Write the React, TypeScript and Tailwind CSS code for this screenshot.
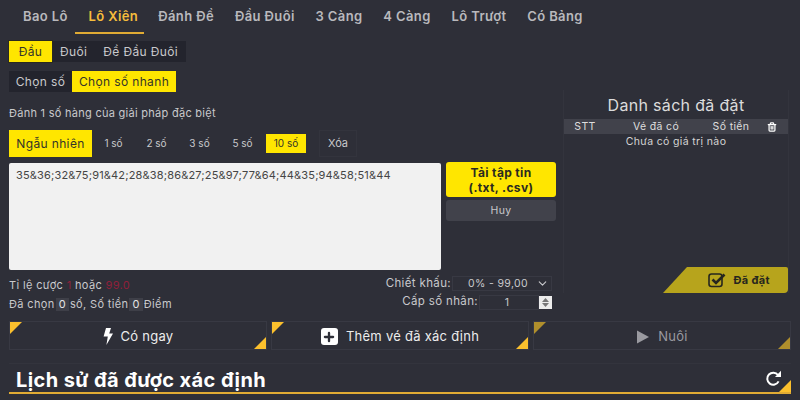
import React from "react";
import { ChevronDown, Trash2, Plus } from "lucide-react";

const F = { fontFamily: '"Inter","Noto Sans",sans-serif' };

function Corner({ dim }: { dim?: boolean }) {
  const c = dim ? "#b08f2c" : "#fbc02d";
  return (
    <>
      <svg className="absolute left-0 top-0" width="12" height="12"><polygon points="0,0 12,0 0,12" fill={c} /></svg>
      <svg className="absolute right-0 bottom-0" width="12" height="12"><polygon points="12,0 12,12 0,12" fill={c} /></svg>
    </>
  );
}

function Action({ children, dim }: { children: React.ReactNode; dim?: boolean }) {
  return (
    <div className={`relative flex-1 h-[29px] pt-[2px] border border-[#383943] flex items-center justify-center gap-2 text-[13px] tracking-[0.02em] ${dim ? "text-[#9a9aa0]" : "text-[#ececec]"}`}>
      <Corner dim={dim} />
      {children}
    </div>
  );
}

const tabs = ["Bao Lô", "Lô Xiên", "Đánh Đề", "Đầu Đuôi", "3 Càng", "4 Càng", "Lô Trượt", "Có Bảng"];

export default function App() {
  return (
    <div style={F} className="w-[800px] h-[400px] overflow-hidden bg-[#2e2f38] text-[#c9c9cc] text-[12px] tracking-[0.03em] flex flex-col">
      <div className="flex h-[34px] pl-[11px] pt-[1px] text-[13px] font-semibold text-[#b9b9bd] tracking-[0.03em]">
        {tabs.map((t) =>
          t === "Lô Xiên" ? (
            <div key={t} className="w-[69px] -ml-[3px] mr-[4px] pl-[8px] flex items-center justify-center whitespace-nowrap border-b-2 text-[#f5bd3c] border-[#e0ab34]">{t}</div>
          ) : (
            <div key={t} className="px-[10.4px] first:pl-[12px] first:pr-[10px] flex items-center whitespace-nowrap border-b-2 border-transparent">{t}</div>
          )
        )}
      </div>

      <div className="flex px-[9px] gap-[7px] h-[287px]">
        <div className="w-[547px] flex flex-col">
          <div className="flex mt-[7px] h-[21px] w-fit bg-[#23242d]">
            <div className="bg-[#ffe600] text-[#34342a] w-[43px] justify-center flex items-center shadow-[0_0_0_1px_#2a2a20]">Đầu</div>
            <div className="px-[8px] flex items-center">Đuôi</div>
            <div className="px-[8px] flex items-center">Đề Đầu Đuôi</div>
          </div>
          <div className="flex mt-[9px] h-[21px] w-fit bg-[#23242d]">
            <div className="w-[63px] justify-center flex items-center">Chọn số</div>
            <div className="bg-[#ffe600] text-[#34342a] w-[104px] justify-center flex items-center">Chọn số nhanh</div>
          </div>
          <div className="mt-[14px] h-[14px] leading-[14px] text-[11px] tracking-[0.025em]">Đánh 1 số hàng của giải pháp đặc biệt</div>
          <div className="flex items-center mt-[10px] h-[27px] text-[10px] tracking-normal">
            <div className="bg-[#ffe600] text-[#34342a] w-[83px] h-[27px] flex items-center justify-center text-[12px] tracking-[0.03em]">Ngẫu nhiên</div>
            <div className="w-[43px] text-center">1 số</div>
            <div className="w-[43px] text-center">2 số</div>
            <div className="w-[43px] text-center">3 số</div>
            <div className="w-[43px] text-center">5 số</div>
            <div className="ml-[2px] w-[40px] h-[19px] bg-[#ffe600] text-[#34342a] flex items-center justify-center">10 số</div>
            <div className="ml-[13px] w-[38px] h-[27px] flex items-center justify-center border border-[#33343d] text-[11px]">Xóa</div>
          </div>
          <div className="flex mt-[6px] gap-[5px]">
            <div className="w-[432px] h-[107px] bg-[#f1f1f1] rounded-[2px] text-[#454545] text-[11px] tracking-[0.015em] px-[7px] py-[4px]">35&amp;36;32&amp;75;91&amp;42;28&amp;38;86&amp;27;25&amp;97;77&amp;64;44&amp;35;94&amp;58;51&amp;44</div>
            <div className="w-[110px] flex flex-col gap-[3px] -mt-[1px]">
              <div className="h-[35px] bg-[#ffe600] rounded-[3px] text-[#2a2a20] font-bold text-[12px] leading-[15px] flex flex-col items-center justify-center"><span>Tải tập tin</span><span>(.txt, .csv)</span></div>
              <div className="h-[21px] bg-[#41424b] rounded-[3px] text-[10.5px] flex items-center justify-center">Huy</div>
            </div>
          </div>
          <div className="flex mt-[5px] h-[17px]">
            <div className="flex-1 flex items-center text-[11px] pt-[3px]"><span>Tỉ lệ cược&nbsp;</span><span className="text-[#8f1f3a]">1</span><span>&nbsp;hoặc&nbsp;</span><span className="text-[#8f1f3a]">99.0</span></div>
            <div className="flex items-center">
              <span className="text-[11.5px] mr-[1px]">Chiết khấu:</span>
              <div className="w-[100px] h-[15px] border border-[#383943] flex items-center justify-between pl-[15px] pr-[2px] text-[10.5px]">0% - 99,00<ChevronDown size={13} /></div>
              <div className="w-[4px]" />
            </div>
          </div>
          <div className="flex mt-[2px] h-[16px] items-center">
            <div className="flex-1 flex items-center text-[11px] pt-[4px]">Đã chọn<span className="bg-[#3e3f48] px-[3px] mx-[1px] leading-[13px] text-[#e4e4e4]">0</span>số, Số tiền<span className="bg-[#3e3f48] px-[3px] mx-[1px] leading-[13px] text-[#e4e4e4]">0</span>Điểm</div>
            <span className="text-[11.5px] mr-[1px]">Cấp số nhân:</span>
            <div className="w-[60px] h-[15px] border border-[#383943] text-center text-[10.5px] leading-[13px] pr-[4px]">1</div>
            <div className="w-[13px] h-[13px] bg-[#ececec] flex flex-col items-center justify-center gap-[1px]">
              <svg width="7" height="4"><polygon points="3.5,0 7,4 0,4" fill="#777" /></svg>
              <svg width="7" height="4"><polygon points="0,0 7,0 3.5,4" fill="#777" /></svg>
            </div>
            <div className="w-[4px]" />
          </div>
        </div>

        <div className="relative w-[226px] mt-[56px] h-[203px] border-x border-[#33343d] flex flex-col items-center">
          <div className="mt-[6px] h-[18px] leading-[18px] text-[16px] tracking-[0.02em] text-[#dcdcdc]">Danh sách đã đặt</div>
          <div className="mt-[5px] w-full h-[15px] bg-[#41424b] flex items-center text-[10.5px] text-[#dedede]">
            <div className="w-[42px] text-center">STT</div>
            <div className="w-[100px] text-center">Vé đã có</div>
            <div className="w-[50px] text-center">Số tiền</div>
            <div className="flex-1 flex justify-center"><Trash2 size={10} strokeWidth={3} className="text-white" /></div>
          </div>
          <div className="mt-[1px] text-[10.5px] text-[#d4d4d4] leading-[14px]">Chưa có giá trị nào</div>
          <div className="absolute right-0 bottom-0 w-[125px] h-[26px] bg-[#b7a41c] rounded-br-[4px] rounded-tr-[2px] [clip-path:polygon(24px_0,100%_0,100%_100%,0_100%)] flex items-center justify-end pr-[18px] gap-[8px] text-[#26261e] font-bold text-[11px]">
            <svg width="18" height="16" viewBox="0 0 18 16" fill="none">
              <rect x="1" y="2" width="13" height="12.5" rx="2.5" stroke="#26261e" strokeWidth="1.6" />
              <path d="M4.5 7.5L8 11L16.5 2.5" stroke="#26261e" strokeWidth="2.6" />
            </svg>
            Đã đặt
          </div>
        </div>
      </div>

      <div className="flex px-[9px] gap-[4px]">
        <Action>
          <svg width="10" height="17" viewBox="0 0 10 17"><polygon points="3,0 8,0 6.2,5.6 10,5.6 3.4,17 4.8,8.6 0.6,8.6" fill="#fff" /></svg>
          Có ngay
        </Action>
        <Action>
          <span className="w-[17px] h-[17px] rounded-[3px] bg-white flex items-center justify-center"><Plus size={14} strokeWidth={4} className="text-[#2e2f38]" /></span>
          Thêm vé đã xác định
        </Action>
        <Action dim>
          <svg width="14" height="14" viewBox="0 0 14 14"><polygon points="1,0.5 13,7 1,13.5" fill="#9a9aa0" /></svg>
          Nuôi
        </Action>
      </div>

      <div className="relative mx-[9px] mt-[13px] h-[31px] border-t border-[#33343d] border-b-2 border-b-[#e0ab34] flex items-center justify-between pl-[7px] pr-[9px]">
        <span className="text-[20px] font-bold text-white pt-[3px] tracking-[0.02em]">Lịch sử đã được xác định</span>
        <svg width="17" height="17" viewBox="0 0 17 17" fill="none">
          <path d="M13.6 11.4A6 6 0 1 1 13 5" stroke="#fff" strokeWidth="2" />
          <polygon points="16,0.8 16,7 10,7" fill="#fff" />
        </svg>
        <svg className="absolute right-0 bottom-0" width="12" height="12"><polygon points="12,0 12,12 0,12" fill="#fbc02d" /></svg>
      </div>
    </div>
  );
}
